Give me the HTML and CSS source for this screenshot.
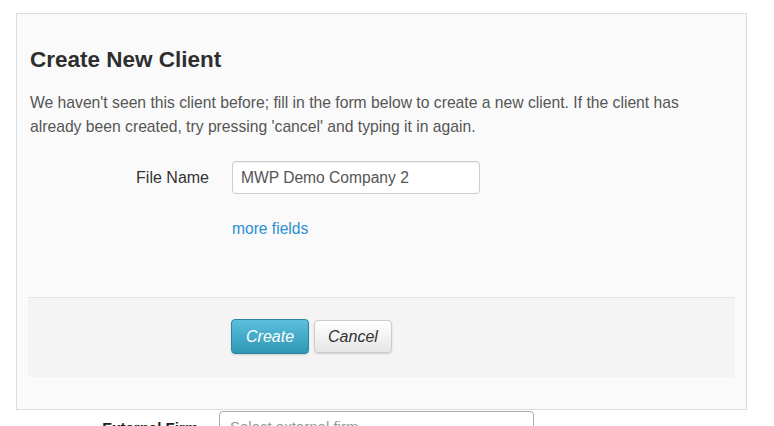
FILE: index.html
```html
<!DOCTYPE html>
<html lang="en">
<head>
    <meta charset="UTF-8">
    <title>Create New Client</title>
    <link rel="stylesheet" href="styles.css">
</head>
<body>
    <div class="page">
        <div class="panel">
            <div class="panel-body">
                <h2>Create New Client</h2>
                <p class="intro">We haven't seen this client before; fill in the form below to create a new client. If the client has already been created, try pressing 'cancel' and typing it in again.</p>

                <div class="form-row">
                    <label for="file-name">File Name</label>
                    <input type="text" id="file-name" value="MWP Demo Company 2">
                </div>
                <div class="form-row">
                    <span class="spacer"></span>
                    <a href="#" class="more-link">more fields</a>
                </div>
            </div>

            <div class="panel-footer">
                <span class="spacer"></span>
                <button type="button" class="btn btn-info">Create</button>
                <button type="button" class="btn">Cancel</button>
            </div>
        </div>

        <div class="under-row">
            <label>External Firm</label>
            <div class="select-box">Select external firm</div>
        </div>
    </div>
</body>
</html>
```

FILE: styles.css
```css
body {
    margin: 0;
    background: #fff;
    font-family: "Liberation Sans", Arial, sans-serif;
    color: #333;
}
.page {
    padding: 13px 0 0 16px;
    width: 731px;
    height: 413px;
    overflow: hidden;
}
.panel {
    border: 1px solid #dcdcdc;
    background: #fafafa;
    padding: 0 11px 32px;
}
.panel-body {
    padding: 33px 2px 0;
    height: 250px;
}
h2 {
    margin: 0;
    font-size: 22.5px;
    font-weight: bold;
    color: #2e2e2e;
    line-height: 26px;
}
.intro {
    max-width: 670px;
    margin: 18px 0 22px;
    font-size: 15.7px;
    line-height: 24px;
    color: #555;
}
.form-row {
    display: flex;
    align-items: center;
    margin-bottom: 26px;
}
.form-row label,
.spacer {
    width: 179px;
    margin-right: 23px;
    text-align: right;
    font-size: 16px;
    color: #333;
    flex: none;
}
.form-row input {
    width: 248px;
    height: 33px;
    box-sizing: border-box;
    padding: 4px 8px;
    border: 1px solid #ccc;
    border-radius: 4px;
    background: #fff;
    font-family: inherit;
    font-size: 15.6px;
    color: #555;
    box-shadow: inset 0 1px 1px rgba(0,0,0,0.05);
}
.more-link {
    font-size: 15.6px;
    line-height: 18px;
    color: #2a8fd0;
    text-decoration: none;
}
.panel-footer {
    display: flex;
    align-items: center;
    border-top: 1px solid #e5e5e5;
    background: #f4f4f4;
    padding: 21px 2px 23px;
}
.panel-footer .spacer {
    margin-right: 22px;
}
.btn {
    height: 33px;
    padding: 0 13px;
    margin-right: 5px;
    border: 1px solid #ccc;
    border-radius: 4px;
    background: linear-gradient(#ffffff, #e6e6e6);
    font-family: inherit;
    font-size: 16px;
    font-style: italic;
    color: #333;
    box-shadow: 0 1px 2px rgba(0,0,0,0.15);
    cursor: pointer;
}
.btn-info {
    height: 35px;
    padding: 0 14px;
    border-color: #2a87a3;
    background: linear-gradient(#5bc0de, #2f96b4);
    color: #fff;
}
.under-row {
    display: flex;
    align-items: flex-start;
    margin-top: 1px;
}
.under-row label {
    width: 182px;
    margin-top: 8px;
    margin-right: 21px;
    text-align: right;
    font-size: 15px;
    font-weight: bold;
    color: #222;
}
.select-box {
    width: 315px;
    height: 30px;
    box-sizing: border-box;
    border: 1px solid #aaa;
    border-radius: 4px;
    padding: 6px 10px;
    font-size: 15px;
    color: #999;
    background: #fff;
}
```
